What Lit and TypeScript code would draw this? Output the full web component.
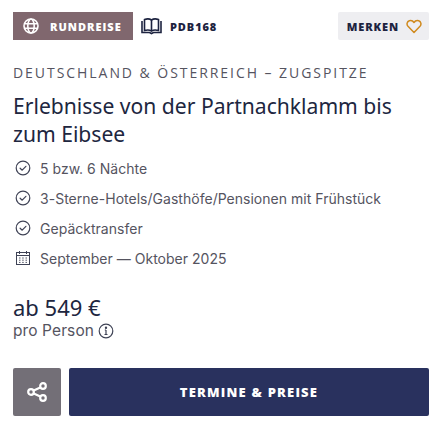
import { LitElement, html, css } from "lit";
import { customElement } from "lit/decorators.js";

const check = html`<svg class="ico" viewBox="0 0 16 16" fill="none" stroke="#3f4356" stroke-width="1.2"><circle cx="8" cy="8" r="6.8"/><path d="M5.100 8.200 7.200 10.200 10.900 6.300" stroke-linecap="round" stroke-linejoin="round"/></svg>`;
const cal = html`<svg class="ico" viewBox="0 0 16 16" fill="none" stroke="#3f4356" stroke-width="1"><rect x="1.500" y="2.500" width="13" height="12"/><path d="M1.500 5.500h13M4.500 1v3M11.500 1v3"/><path d="M4 8h1.500M7.200 8h1.500M10.500 8H12M4 10.200h1.500M7.200 10.200h1.500M10.500 10.200H12M4 12.400h1.500M7.200 12.400h1.500M10.500 12.400H12" stroke-width=".9"/></svg>`;

@customElement("app-root")
export class AppRoot extends LitElement {
  static styles = css`
    :host { display: block; width: 437px; height: 434px; background: #fff; box-sizing: border-box; padding: 12px 8px 0 13px; font-family: "Noto Sans", sans-serif; color: #292f4f; }
    .top { display: flex; align-items: center; height: 28px; }
    .label { font-family: "Open Sans", sans-serif; font-weight: 800; }
    .tag { display: flex; align-items: center; width: 120px; height: 28px; background: #80676e; color: #fff; box-sizing: border-box; padding-left: 10px; font-size: 11px; letter-spacing: 1px; }
    .tag svg { width: 16px; height: 16px; margin-right: 11px; }
    .code { display: flex; align-items: center; margin-left: 8px; font-size: 11px; letter-spacing: .9px; color: #1d2340; }
    .code svg { width: 21px; height: 18px; margin-right: 8px; }
    .merken { margin-left: auto; display: flex; align-items: center; height: 28px; background: #eeeef1; border-radius: 2px; padding: 0 7px 0 9px; font-size: 11px; letter-spacing: .9px; color: #1d2340; }
    .merken svg { width: 16px; height: 15px; margin-left: 7px; }
    .region { margin-top: 23px; font-family: "Open Sans", sans-serif; font-size: 14px; line-height: 20px; letter-spacing: 1.95px; color: #55545f; white-space: nowrap; }
    h1 { margin: 9px 0 0; font-size: 21.100px; line-height: 28px; font-weight: 400; color: #20263f; width: 400px; }
    ul { list-style: none; margin: 10px 0 0; padding: 0; display: flex; flex-direction: column; gap: 10px; }
    li { display: flex; align-items: center; height: 20px; gap: 9px; font-family: Inter, sans-serif; font-size: 14px; letter-spacing: .02px; color: #55545f; padding-left: 2px; }
    .ico { width: 16px; height: 16px; flex: none; }
    .price { margin-top: 25px; font-size: 22px; line-height: 28px; color: #20263f; }
    .per { display: flex; align-items: center; gap: 4px; font-family: Inter, sans-serif; font-size: 15.500px; letter-spacing: .1px; line-height: 20px; color: #55545f; }
    .per svg { width: 16px; height: 16px; }
    .actions { display: flex; gap: 8px; margin-top: 27px; }
    .share { width: 48px; height: 48px; background: #736f77; border-radius: 2px; display: flex; align-items: center; justify-content: center; }
    .share svg { width: 20px; height: 20px; }
    .cta { flex: 1; height: 48px; background: #29315e; border-radius: 2px; color: #fff; display: flex; align-items: center; justify-content: center; font-size: 13px; letter-spacing: 1.2px; }
  `;
  render() {
    return html`
      <div class="top">
        <div class="tag label"><svg viewBox="0 0 16 16" fill="none" stroke="#fff" stroke-width="1.6"><circle cx="8" cy="8" r="7"/><ellipse cx="8" cy="8" rx="3.2" ry="7"/><path d="M1.500 5.700h13M1.500 10.300h13"/></svg>RUNDREISE</div>
        <div class="code label"><svg viewBox="0 0 21 18" fill="none" stroke="#1d2340" stroke-width="1.6"><path d="M3.500 2.500C6 1.600 8.500 1.600 10.500 3c2-1.400 4.500-1.400 7-.5V13.500c-2.500-.8-5-.8-7 .5-2-1.300-4.500-1.300-7-.5z"/><path d="M10.500 3v11"/><path d="M1 4v11.500h7.500l2 1 2-1H20V4"/></svg>PDB168</div>
        <div class="merken label">MERKEN<svg viewBox="0 0 16 15" fill="none" stroke="#d08a1e" stroke-width="1.5"><path d="M8 13.500 2 7.300C.3 5.400 1 2.500 3.300 1.800 5 1.300 7 2 8 3.500 9 2 11 1.300 12.700 1.800 15 2.500 15.700 5.400 14 7.300z" stroke-linejoin="round"/></svg></div>
      </div>
      <div class="region">DEUTSCHLAND &amp; ÖSTERREICH – ZUGSPITZE</div>
      <h1>Erlebnisse von der Partnachklamm bis zum Eibsee</h1>
      <ul>
        <li>${check}5 bzw. 6 Nächte</li>
        <li>${check}3-Sterne-Hotels/Gasthöfe/Pensionen mit Frühstück</li>
        <li>${check}Gepäcktransfer</li>
        <li>${cal}September — Oktober 2025</li>
      </ul>
      <div class="price">ab 549 €</div>
      <div class="per">pro Person <svg viewBox="0 0 16 16" fill="none" stroke="#3f4356" stroke-width="1.2"><circle cx="8" cy="8" r="6.800"/><path d="M8 7v4.500M6.500 11.500h3M6.800 7H8"/><circle cx="8" cy="4.700" r=".6" fill="#3f4356"/></svg></div>
      <div class="actions">
        <div class="share"><svg viewBox="0 0 20 20" fill="none" stroke="#fff" stroke-width="2.200"><circle cx="4" cy="10" r="2.800"/><circle cx="16" cy="4" r="2.800"/><circle cx="16" cy="16" r="2.800"/><path d="M6.700 8.600 13.300 5.400M6.700 11.400 13.300 14.600"/></svg></div>
        <div class="cta label">TERMINE &amp; PREISE</div>
      </div>
    `;
  }
}
